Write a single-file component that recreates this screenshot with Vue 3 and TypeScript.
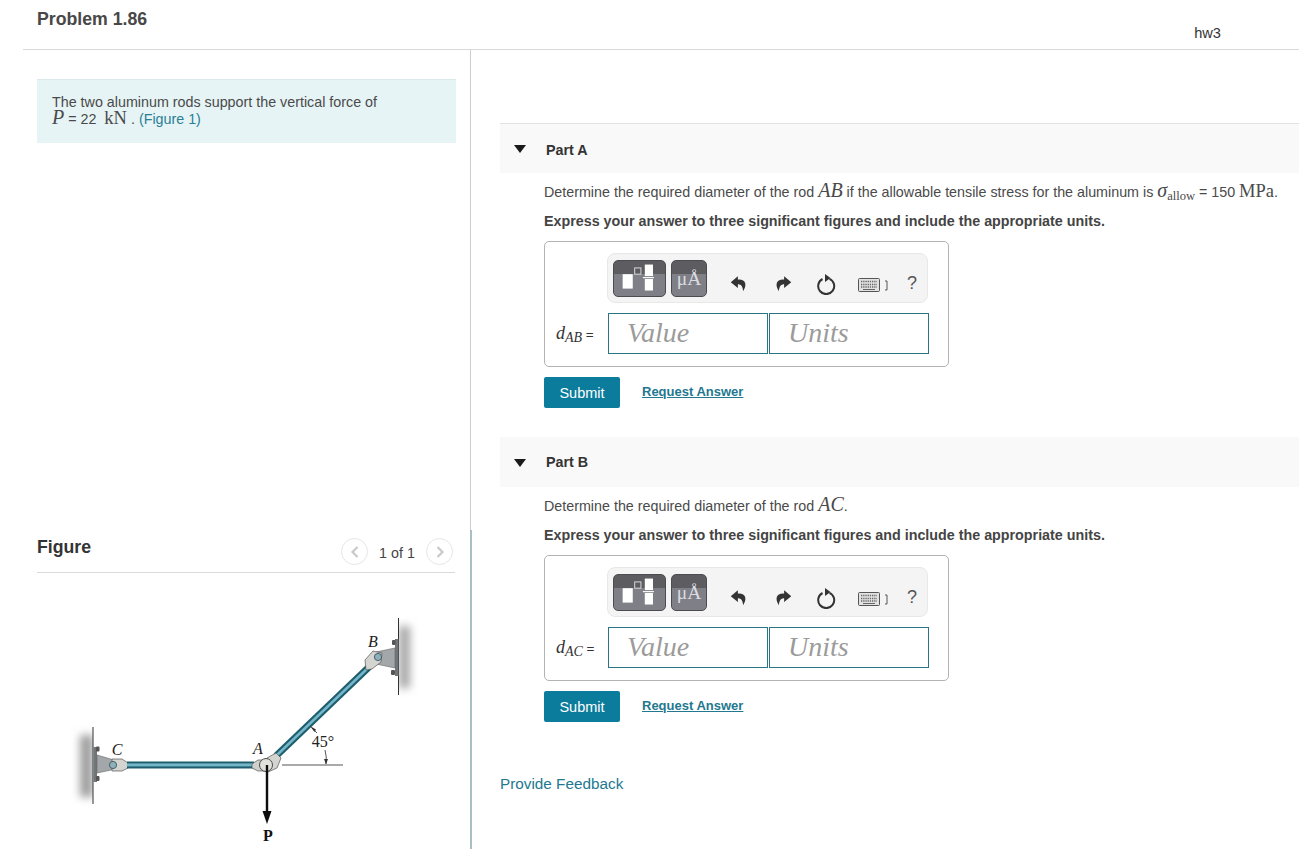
<script setup lang="ts">
interface Part {
  id: string
  label: string
  sub: string
}
const parts: Part[] = [
  { id: 'a', label: 'Part A', sub: 'AB' },
  { id: 'b', label: 'Part B', sub: 'AC' },
]
</script>

<template>
  <div class="page">
    <header class="top">
      <h1 class="title">Problem 1.86</h1>
      <span class="hw">hw3</span>
    </header>
    <div class="cols">
      <aside class="left">
        <section class="intro">
          <div class="note">
            <div>The two aluminum rods support the vertical force of</div>
            <div><i class="m mi">P</i> = 22 &nbsp;<span class="m">kN</span> . <a class="link">(Figure 1)</a></div>
          </div>
        </section>
        <section class="figure">
          <div class="fig-head">
            <h2 class="fig-title">Figure</h2>
            <div class="pager">
              <span class="circle">
                <svg width="10" height="14" viewBox="0 0 10 14"><path d="M7.5 2 L2.5 7 L7.5 12" fill="none" stroke="#c9c9c9" stroke-width="2.2" /></svg>
              </span>
              <span class="count">1 of 1</span>
              <span class="circle">
                <svg width="10" height="14" viewBox="0 0 10 14"><path d="M2.5 2 L7.5 7 L2.5 12" fill="none" stroke="#c9c9c9" stroke-width="2.2" /></svg>
              </span>
            </div>
          </div>
          <svg class="diagram" width="432" height="276" viewBox="37 573 432 276">
            <defs>
              <filter id="soft" x="-200%" y="-40%" width="500%" height="180%"><feGaussianBlur stdDeviation="4" /></filter>
              <filter id="tiny" x="-10%" y="-10%" width="120%" height="120%"><feGaussianBlur stdDeviation="0.4" /></filter>
              <clipPath id="clipC"><rect x="60" y="715" width="33" height="100" /></clipPath>
              <clipPath id="clipB"><rect x="399" y="605" width="30" height="100" /></clipPath>
            </defs>
            <!-- wall shading -->
            <g clip-path="url(#clipC)"><rect x="80" y="735" width="13" height="62" fill="#9c9c9c" filter="url(#soft)" /></g>
            <g clip-path="url(#clipB)"><rect x="399" y="626" width="11" height="62" fill="#a6a6a6" filter="url(#soft)" /></g>
            <g filter="url(#tiny)">
              <!-- walls -->
              <line x1="93" y1="727" x2="93" y2="804" stroke="#333" stroke-width="1" />
              <line x1="398.5" y1="618" x2="398.5" y2="695" stroke="#333" stroke-width="1" />
              <!-- bracket C -->
              <rect x="93.500" y="747" width="3.500" height="35" fill="#6f7478" />
              <rect x="96" y="746.500" width="3.500" height="5" rx="1" fill="#555" />
              <rect x="96" y="776" width="3.500" height="5" rx="1" fill="#555" />
              <path d="M97 755 L114 760 L116 769 L97 773 Z" fill="#a3a7aa" stroke="#666" stroke-width=".6" />
              <!-- clevis C -->
              <path d="M112 759 L122 759 L128 763 L128 768 L122 771 L112 771 Z" fill="#d4d4d0" stroke="#555" stroke-width=".7" />
              <circle cx="113" cy="765" r="3.600" fill="#8fb0bb" stroke="#48616b" stroke-width="1" />
              <!-- rod AC -->
              <rect x="127" y="761.500" width="127" height="7" fill="#1f5d6e" />
              <rect x="127" y="763.400" width="127" height="3" fill="#74b6c8" />
              <!-- rod AB -->
              <line x1="276" y1="756" x2="369" y2="667" stroke="#1f5d6e" stroke-width="7" />
              <line x1="276" y1="756" x2="369" y2="667" stroke="#74b6c8" stroke-width="2.600" />
              <!-- bracket B -->
              <rect x="395" y="639" width="3.500" height="37" fill="#6f7478" />
              <rect x="392" y="640" width="3.500" height="5" rx="1" fill="#555" />
              <rect x="391" y="670" width="4" height="5" rx="1" fill="#555" />
              <path d="M395 648 L376 652 L376 664 L395 668 Z" fill="#a3a7aa" stroke="#666" stroke-width=".6" />
              <!-- clevis B -->
              <path d="M373 651 L382 653 L381 662 L372 669 L366 670 L365 660 Z" fill="#d4d4d0" stroke="#555" stroke-width=".7" />
              <circle cx="378" cy="657" r="3.600" fill="#8fb0bb" stroke="#48616b" stroke-width="1" />
              <!-- joint A -->
              <path d="M252 764 L258 760 L266 760 L266 771 L258 771 L252 768 Z" fill="#cfcfcb" stroke="#555" stroke-width=".7" />
              <path d="M267 758 L276 753 L281 758 L277 768 L268 772 Z" fill="#d4d4d0" stroke="#555" stroke-width=".7" />
              <circle cx="266" cy="765" r="6.500" fill="#e0e0dc" stroke="#4a4a4a" stroke-width="1" />
              <!-- dimension -->
              <line x1="282" y1="765" x2="343" y2="765" stroke="#444" stroke-width=".9" />
              <path d="M325 750 Q327 757 326 764" fill="none" stroke="#444" stroke-width=".9" />
              <path d="M324 759 L326 764.500 L328 759 Z" fill="#333" />
              <path d="M317 733 L312 728" fill="none" stroke="#444" stroke-width=".9" />
              <path d="M314.500 732 L310 726 L316 729.500 Z" fill="#333" />
              <!-- force -->
              <line x1="267" y1="765" x2="267" y2="814" stroke="#111" stroke-width="2.400" />
              <path d="M262.500 811 L271.500 811 L267 824 Z" fill="#111" />
            </g>
            <text x="373" y="647" class="lbl" text-anchor="middle">B</text>
            <text x="117" y="755" class="lbl" text-anchor="middle">C</text>
            <text x="258" y="754" class="lbl" text-anchor="middle">A</text>
            <text x="323" y="747" class="deg" text-anchor="middle">45°</text>
            <text x="268" y="841" class="pp" text-anchor="middle">P</text>
          </svg>
        </section>
      </aside>

      <main class="right">
        <section v-for="p in parts" :key="p.id" class="part">
          <div class="part-head">
            <span class="tri"></span>
            <span class="part-label" :class="'label-' + p.id">{{ p.label }}</span>
          </div>
          <div class="part-body">
            <p v-if="p.id === 'a'" class="q">
              Determine the required diameter of the rod <i class="m mi">AB</i> if the allowable tensile stress for the aluminum is <i class="m mi">σ</i><sub class="sub-allow">allow</sub> = 150 <span class="m">MPa</span>.
            </p>
            <p v-else class="q">Determine the required diameter of the rod <i class="m mi">AC</i>.</p>
            <p class="express">Express your answer to three significant figures and include the appropriate units.</p>

            <div class="answer">
              <div class="toolbar">
                <button class="tb tb-wide" type="button" aria-label="Templates">
                  <svg width="53" height="37" viewBox="0 0 53 37">
                    <rect x="9" y="14" width="10.500" height="15" fill="#fff" />
                    <rect x="21.500" y="7.500" width="6.500" height="6.500" fill="none" stroke="#ddd" stroke-width="1" />
                    <rect x="32" y="4" width="8.500" height="12" fill="#fff" />
                    <rect x="30" y="17" width="11.500" height="1.200" fill="#fff" />
                    <rect x="32" y="19" width="8.500" height="12" fill="#fff" />
                  </svg>
                </button>
                <button class="tb tb-mu" type="button">μÅ</button>
                <span class="tool tool-undo">
                  <svg width="18" height="18" viewBox="0 0 24 24"><path d="M10.500 3 L1 11 L10.500 18.500 V13.500 C14.500 13.500 17 16 17.500 23 C23.500 14 20.500 6.500 10.500 7.500 Z" fill="#333" /></svg>
                </span>
                <span class="tool tool-redo">
                  <svg width="18" height="18" viewBox="0 0 24 24"><path d="M13.500 3 L23 11 L13.500 18.500 V13.500 C9.500 13.500 7 16 6.500 23 C0.500 14 3.500 6.500 13.500 7.500 Z" fill="#333" /></svg>
                </span>
                <span class="tool tool-reset">
                  <svg width="20" height="22" viewBox="0 0 20 22"><path d="M6.500 6 A8 8 0 1 0 13.500 5.800" fill="none" stroke="#333" stroke-width="2" /><path d="M9 1 L14.500 5 L9 9 Z" fill="#333" /></svg>
                </span>
                <span class="tool tool-kb">
                  <svg width="31" height="14" viewBox="0 0 31 14">
                    <rect x=".5" y=".5" width="21" height="13" rx="1" fill="#e2e2e2" stroke="#555" />
                    <path d="M3 3.500 H19 M3 6.500 H19 M3 9 H19" stroke="#666" stroke-width="1.300" stroke-dasharray="1.300 .9" />
                    <path d="M5 11.500 H17" stroke="#666" stroke-width="1" />
                    <path d="M27 3 H29 V12 H27" fill="none" stroke="#555" stroke-width="1" />
                  </svg>
                </span>
                <span class="tool-help">?</span>
              </div>
              <div class="entry">
                <span class="var"><i class="d">d</i><sub class="dsub">{{ p.sub }}</sub> <span class="eq">=</span></span>
                <div class="field">Value</div>
                <div class="field">Units</div>
              </div>
            </div>

            <div class="actions">
              <button class="submit" type="button">Submit</button>
              <a class="req">Request Answer</a>
            </div>
          </div>
        </section>
        <a class="feedback">Provide Feedback</a>
      </main>
    </div>
  </div>
</template>

<style>
html, body { margin: 0; overflow: hidden; background: #fff; }
</style>

<style scoped>
.page {
  width: 1299px;
  height: 849px;
  overflow: hidden;
  font-family: "Liberation Sans", Arial, sans-serif;
  font-size: 14.3px;
  color: #444;
}
.top {
  height: 49px;
  margin-left: 23px;
  border-bottom: 1px solid #d9d9d9;
  display: flex;
  justify-content: space-between;
  box-sizing: content-box;
}
.title {
  margin: 8px 0 0 14px;
  font-size: 17.7px;
  line-height: 22px;
  font-weight: 700;
  color: #484848;
}
.hw {
  margin: 25px 78px 0 0;
  font-size: 14.6px;
  line-height: 16px;
  color: #333;
}
.cols {
  display: grid;
  grid-template-columns: 471px 1fr;
  height: 799px;
}
.left {
  display: flex;
  flex-direction: column;
}
.intro {
  height: 480px;
  box-sizing: border-box;
  padding: 29px 14px 0 37px;
  border-right: 1px solid #ccc;
}
.note {
  height: 64px;
  box-sizing: border-box;
  padding: 14px 14px 0 15px;
  background: #e6f4f5;
  border-top: 1px solid #dbe9ea;
  line-height: 17px;
  color: #4a4a4a;
}
.m {
  font-family: "Liberation Serif", "Times New Roman", serif;
  font-size: 18.5px;
  line-height: 0;
}
.mi { font-style: italic; font-size: 20px; }
.link { color: #2a7f96; }
.figure {
  flex: 1;
  box-sizing: border-box;
  padding-left: 37px;
  border-right: 2px solid #a9bfc4;
  margin-right: -1px;
}
.fig-head {
  height: 43px;
  width: 418px;
  box-sizing: border-box;
  border-bottom: 1px solid #d9d9d9;
  display: flex;
  justify-content: space-between;
  align-items: flex-start;
}
.fig-title {
  margin: 6px 0 0;
  font-size: 17.7px;
  line-height: 22px;
  font-weight: 700;
  color: #333;
}
.pager {
  display: flex;
  align-items: center;
  margin-top: 8px;
  margin-right: 2px;
}
.circle {
  width: 27px;
  height: 27px;
  box-sizing: border-box;
  border: 1px solid #e6e6e6;
  border-radius: 50%;
  display: flex;
  align-items: center;
  justify-content: center;
}
.count {
  width: 58px;
  padding-top: 2px;
  text-align: center;
  font-size: 14.3px;
  color: #444;
}
.diagram { display: block; margin-left: 0; }
.lbl { font: italic 16px "Liberation Serif", serif; fill: #222; }
.deg { font: 16px "Liberation Serif", serif; fill: #222; }
.pp { font: 700 16px "Liberation Serif", serif; fill: #111; }

.right {
  padding: 73px 0 0 29px;
}
.part { margin-bottom: 29px; }
.part:last-of-type { margin-bottom: 0; }
.part-head {
  height: 50px;
  box-sizing: border-box;
  background: #f9f9f9;
  border-top: 1px solid #e2e2e2;
  display: flex;
  align-items: center;
  position: relative;
}
.part + .part .part-head { border-top-color: #f9f9f9; }
.tri {
  margin-left: 14px;
  width: 0;
  height: 0;
  border-left: 6.500px solid transparent;
  border-right: 6.500px solid transparent;
  border-top: 8px solid #1a1a1a;
}
.part-label {
  margin-left: 20px;
  font-weight: 700;
  font-size: 14.3px;
  color: #333;
}
.label-a { margin-top: 2px; }
.label-b { margin-bottom: 2px; }
.part-body { padding-left: 44px; }
.q {
  margin: 9px 0 0;
  line-height: 21px;
  height: 21px;
  white-space: nowrap;
  color: #4a4a4a;
}
.sub-allow {
  font-family: "Liberation Serif", serif;
  font-size: 12.5px;
  vertical-align: -3px;
  line-height: 0;
}
.express {
  margin: 8px 0 0;
  line-height: 20px;
  font-weight: 700;
  font-size: 14.3px;
  color: #444;
}
.answer {
  margin-top: 10px;
  width: 405px;
  height: 126px;
  box-sizing: border-box;
  border: 1px solid #b3b3b3;
  border-radius: 5px;
  padding: 11px 0 0 62px;
}
.toolbar {
  width: 321px;
  height: 50px;
  box-sizing: border-box;
  background: #f4f4f4;
  border: 1px solid #e8e8e8;
  border-radius: 8px;
  display: flex;
  align-items: center;
  padding-left: 5px;
  position: relative;
}
.tb {
  height: 37px;
  padding: 0;
  border: 1px solid #4c4c50;
  border-radius: 5px;
  background: linear-gradient(#5d5d61 0 36%, #7f7f87 36% 100%);
  display: flex;
  align-items: center;
  justify-content: center;
}
.tb-wide { width: 53px; }
.tb-mu {
  width: 36px;
  margin-left: 5px;
  padding-top: 2px;
  font-family: "Liberation Serif", serif;
  font-size: 19.500px;
  color: #dcdce0;
  line-height: 1;
}
.tool { position: absolute; display: flex; }
.tool-undo { left: 122px; top: 20px; }
.tool-redo { left: 166px; top: 20px; }
.tool-reset { left: 208px; top: 19px; }
.tool-kb { left: 250px; top: 24px; }
.tool-help {
  position: absolute;
  left: 299px;
  top: 18px;
  font-size: 18px;
  line-height: 22px;
  color: #555;
}
.entry {
  display: flex;
  align-items: center;
  margin-top: 10px;
  margin-left: -52px;
}
.var {
  width: 53px;
  padding-left: 1px;
  box-sizing: border-box;
  font-family: "Liberation Serif", serif;
  color: #333;
  white-space: nowrap;
}
.d { font-size: 18px; font-style: italic; }
.dsub { font-size: 14px; font-style: italic; vertical-align: -3px; line-height: 0; }
.eq { font-family: "Liberation Sans", sans-serif; font-size: 13.500px; }
.field {
  width: 160px;
  height: 41px;
  box-sizing: border-box;
  border: 1px solid #2b7583;
  margin-right: 1px;
  padding-left: 18px;
  font-family: "Liberation Serif", serif;
  font-style: italic;
  font-size: 28px;
  line-height: 38px;
  color: #9b9b9b;
}
.actions {
  margin-top: 10px;
  display: flex;
  align-items: flex-start;
}
.submit {
  width: 76px;
  height: 31px;
  padding: 0;
  border: 0;
  border-radius: 2px;
  background: #0c7c9c;
  color: #fff;
  font: 14.500px "Liberation Sans", sans-serif;
}
.req {
  margin: 7px 0 0 22px;
  font-size: 13px;
  line-height: 16px;
  font-weight: 700;
  color: #23788f;
  text-decoration: underline;
}
.feedback {
  display: block;
  margin-top: 53px;
  font-size: 15.300px;
  line-height: 18px;
  color: #23788f;
}
</style>
